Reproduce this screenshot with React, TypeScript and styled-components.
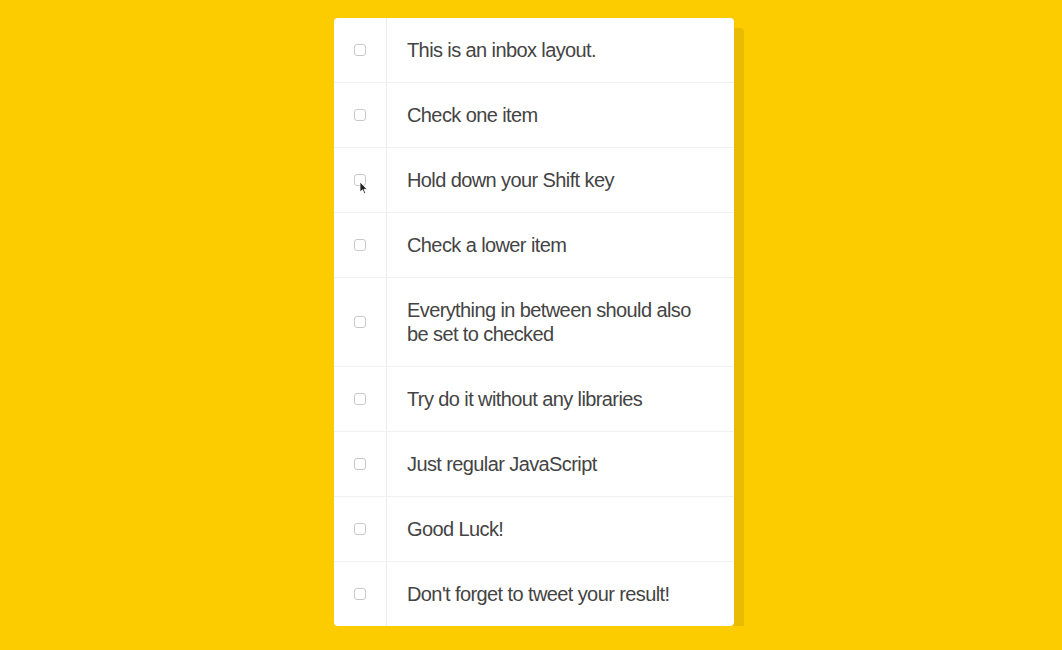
import React from "react";
import styled, { createGlobalStyle } from "styled-components";

const Global = createGlobalStyle`
  html { background: #fccc00; }
  body { margin: 0; padding: 18px 0 0 6px; font-family: "Liberation Sans", Arial, sans-serif; }
`;

const Inbox = styled.div`
  width: 400px;
  margin: 0 auto;
  background: #fff;
  border-radius: 4px;
  box-shadow: 10px 10px 0 rgba(0, 0, 0, 0.08);
`;

const Item = styled.div`
  display: flex;
  align-items: center;
  border-bottom: 1px solid #f1f1f1;
  &:last-child { border-bottom: 0; }
`;

const CheckCell = styled.div`
  position: relative;
  width: 52px;
  display: flex;
  justify-content: center;
  align-items: center;
  flex-shrink: 0;
`;

const Check = styled.input`
  appearance: none;
  width: 12px;
  height: 12px;
  margin: 0 1px 0 0;
  border: 1px solid #c9c9c9;
  border-radius: 3px;
  background: #fff;
  box-sizing: border-box;
`;

const Text = styled.p`
  margin: 0;
  padding: 20px 24px 20px 20px;
  flex: 1;
  font-size: 20px;
  line-height: 24px;
  font-weight: 400;
  color: #444;
  letter-spacing: -0.6px;
  border-left: 1px solid #ececec;
`;

const Cursor = styled.svg`
  position: absolute;
  left: 25px;
  top: 7px;
`;

const items = [
  "This is an inbox layout.",
  "Check one item",
  "Hold down your Shift key",
  "Check a lower item",
  "Everything in between should also be set to checked",
  "Try do it without any libraries",
  "Just regular JavaScript",
  "Good Luck!",
  "Don't forget to tweet your result!",
];

export default function App() {
  return (
    <>
      <Global />
      <Inbox>
        {items.map((t, i) => (
          <Item key={i}>
            <CheckCell>
              <Check type="checkbox" />
              {i === 2 && (
                <Cursor width="9" height="14" viewBox="0 0 9 14">
                  <path d="M1 1 L1 11 L3.5 8.8 L5.2 12.6 L6.6 12 L5 8.3 L8 8.2 Z" fill="#222" stroke="#fff" strokeWidth="0.8" />
                </Cursor>
              )}
            </CheckCell>
            <Text>{t}</Text>
          </Item>
        ))}
      </Inbox>
    </>
  );
}
